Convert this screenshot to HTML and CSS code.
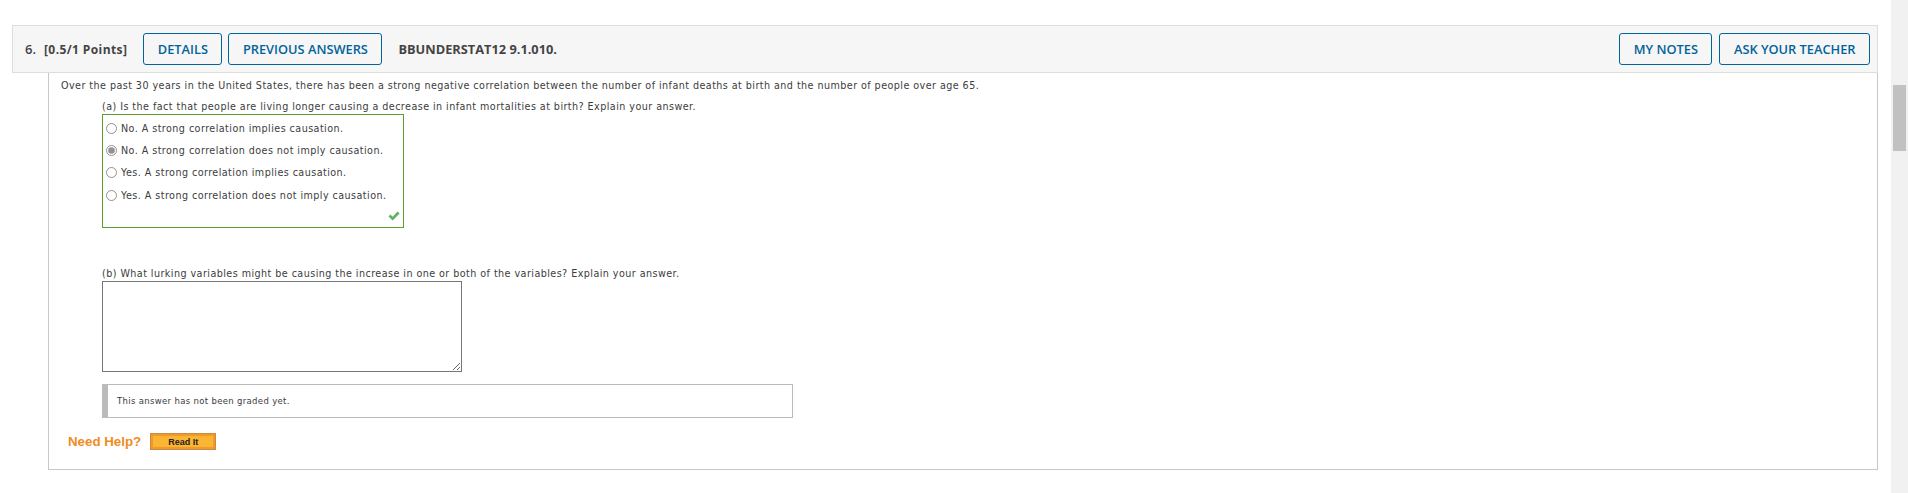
FILE: index.html
```html
<!DOCTYPE html>
<html lang="en">
  <head>
    <meta charset="UTF-8" />
    <meta name="viewport" content="width=device-width, initial-scale=1.0" />
    <title>Question 6</title>
    <link rel="stylesheet" href="styles.css">
  </head>
  <body>
    <div class="page">
      <main class="main">
        <div class="question-bar">
          <span class="question-num">6.</span>
          <span class="question-points">[0.5/1 Points]</span>
          <a class="bar-btn">DETAILS</a>
          <a class="bar-btn">PREVIOUS ANSWERS</a>
          <span class="question-code">BBUNDERSTAT12 9.1.010.</span>
          <a class="bar-btn notes-btn">MY NOTES</a>
          <a class="bar-btn">ASK YOUR TEACHER</a>
        </div>
        <div class="question-body">
          <p class="intro">Over the past 30 years in the United States, there has been a strong negative correlation between the number of infant deaths at birth and the number of people over age 65.</p>
          <div class="part">
            <p class="part-text">(a) Is the fact that people are living longer causing a decrease in infant mortalities at birth? Explain your answer.</p>
            <div class="choices">
              <label class="choice"><input type="radio" name="a" />No. A strong correlation implies causation.</label>
              <label class="choice"><input type="radio" name="a" checked />No. A strong correlation does not imply causation.</label>
              <label class="choice"><input type="radio" name="a" />Yes. A strong correlation implies causation.</label>
              <label class="choice"><input type="radio" name="a" />Yes. A strong correlation does not imply causation.</label>
              <svg class="check" viewBox="0 0 12 10" width="12" height="10">
                <path d="M0.5 5.5 L2.4 3.6 L4.6 5.8 L9.6 0.6 L11.6 2.5 L4.6 9.6 Z" fill="#62b264" />
              </svg>
            </div>
          </div>
          <div class="part part-b">
            <p class="part-text">(b) What lurking variables might be causing the increase in one or both of the variables? Explain your answer.</p>
            <textarea class="answer-box"></textarea>
            <div class="status">This answer has not been graded yet.</div>
          </div>
          <div class="help">
            <span class="help-label">Need Help?</span>
            <a class="read-btn">Read It</a>
          </div>
        </div>
      </main>
      <div class="scrollbar"><div class="scroll-thumb"></div></div>
    </div>
  </body>
</html>
```

FILE: styles.css
```css
html,
body {
  margin: 0;
  height: 100%;
  overflow: hidden;
  background: #fff;
}
p {
  margin: 0;
}
.page {
  display: flex;
  height: 493px;
  font-family: "DejaVu Sans", Verdana, sans-serif;
  font-size: 9.6px;
  letter-spacing: 0.44px;
  color: #3c3c3c;
}
.main {
  flex: 1;
  padding: 25px 13px 0 12px;
}
.scrollbar {
  width: 17px;
  background: #f1f1f1;
  padding: 85px 2px 0;
  box-sizing: border-box;
}
.scroll-thumb {
  height: 66px;
  background: #c1c1c1;
}
.question-bar {
  display: flex;
  align-items: center;
  gap: 6px;
  height: 48px;
  box-sizing: border-box;
  padding: 0 7px 0 12px;
  background: #f6f6f6;
  border: 1px solid #ddd;
  font-family: "Open Sans", sans-serif;
  font-size: 13px;
  letter-spacing: 0;
  color: #444;
}
.question-num {
  font-weight: 600;
}
.question-points {
  font-weight: 700;
  font-size: 12px;
  letter-spacing: 0.4px;
  margin: 0 10px 0 2px;
}
.question-code {
  font-weight: 700;
  font-size: 12.8px;
  margin-left: 10px;
  flex: 1;
}
.bar-btn {
  height: 32px;
  box-sizing: border-box;
  padding: 0 13.5px;
  display: flex;
  align-items: center;
  border: 1px solid #00639c;
  border-radius: 3px;
  color: #00639c;
  font-weight: 600;
  font-size: 12.8px;
}
.notes-btn {
  margin-right: 1px;
}
.question-body {
  margin-left: 36px;
  height: 397px;
  box-sizing: border-box;
  padding: 7px 0 0 12px;
  border: 1px solid #c8c8c8;
  border-top: none;
}
.intro {
  line-height: 12px;
}
.part {
  margin: 9px 0 0 41px;
}
.part-text {
  line-height: 12px;
}
.choices {
  position: relative;
  width: 302px;
  height: 114px;
  box-sizing: border-box;
  margin-top: 1px;
  padding-top: 2px;
  border: 1px solid #5aa02c;
}
.choice {
  display: flex;
  align-items: center;
  height: 22.4px;
}
.choice input {
  width: 11px;
  height: 11px;
  margin: 0 4px 0 3px;
  accent-color: #777;
  opacity: 0.8;
}
.check {
  position: absolute;
  right: 3px;
  bottom: 6px;
}
.part-b {
  margin-top: 40px;
}
.answer-box {
  display: block;
  width: 360px;
  height: 91px;
  box-sizing: border-box;
  margin-top: 1px;
  border: 1px solid #767676;
}
.status {
  width: 691px;
  height: 34px;
  box-sizing: border-box;
  margin-top: 12px;
  padding-left: 9px;
  display: flex;
  align-items: center;
  border: 1px solid #bbb;
  border-left: 6px solid #bbb;
  font-size: 8.5px;
  letter-spacing: 0.33px;
}
.help {
  display: flex;
  align-items: center;
  gap: 9px;
  margin: 15px 0 0 7px;
  letter-spacing: 0;
}
.help-label {
  font-family: "Liberation Sans", Arial, sans-serif;
  font-weight: 700;
  font-size: 13.3px;
  color: #f08c1e;
}
.read-btn {
  width: 66px;
  height: 17px;
  box-sizing: border-box;
  display: flex;
  align-items: center;
  justify-content: center;
  background: #fcb433;
  border: 1px solid #c98a44;
  box-shadow: inset 0 0 0 2px #ef9a2a;
  font-family: "Liberation Sans", Arial, sans-serif;
  font-weight: 700;
  font-size: 9px;
  color: #222;
}
```
